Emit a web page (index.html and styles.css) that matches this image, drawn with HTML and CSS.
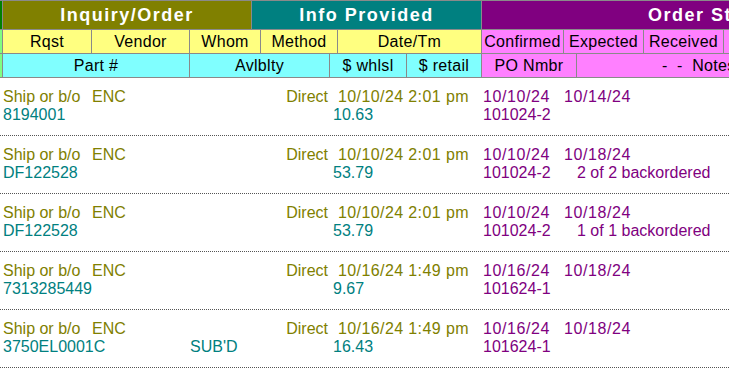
FILE: index.html
```html
<!DOCTYPE html>
<html>
<head>
<meta charset="utf-8">
<link rel="stylesheet" href="styles.css">
</head>
<body>
<div class="grid">
  <div class="hdr">
    <div class="hrow r1">
      <div class="strip s-dark"></div>
      <div class="cell g-olive w-inq">Inquiry/Order</div>
      <div class="cell g-teal w-info">Info Provided</div>
      <div class="cell g-purple w-order">Order Status</div>
    </div>
    <div class="hrow r2">
      <div class="strip s-light"></div>
      <div class="cell yel w-rqst">Rqst</div>
      <div class="cell yel w-vendor">Vendor</div>
      <div class="cell yel w-whom">Whom</div>
      <div class="cell yel w-method">Method</div>
      <div class="cell yel w-date">Date/Tm</div>
      <div class="cell pink w-conf">Confirmed</div>
      <div class="cell pink w-exp">Expected</div>
      <div class="cell pink w-rec">Received</div>
      <div class="cell pink w-more"></div>
    </div>
    <div class="hrow r3">
      <div class="strip s-light"></div>
      <div class="cell cyan w-part">Part #</div>
      <div class="cell cyan w-avl">Avlblty</div>
      <div class="cell cyan w-whlsl">$ whlsl</div>
      <div class="cell cyan w-retail">$ retail</div>
      <div class="cell pink w-po">PO Nmbr</div>
      <div class="cell pink w-notes">-  -  Notes  -  -</div>
    </div>
  </div>

  <div class="rec">
    <div class="line">
      <span class="d olive d-rqst">Ship or b/o</span><span class="d olive d-vendor">ENC</span><span class="d d-whom"></span><span class="d olive d-method">Direct</span><span class="d olive d-date">10/10/24 2:01 pm</span><span class="d purple d-conf">10/10/24</span><span class="d purple d-exp">10/14/24</span>
    </div>
    <div class="line">
      <span class="d teal d-part">8194001</span><span class="d teal d-avl"></span><span class="d teal d-whlsl">10.63</span><span class="d d-retail"></span><span class="d purple d-po">101024-2</span><span class="d purple d-notes"></span>
    </div>
  </div>

  <div class="rec">
    <div class="line">
      <span class="d olive d-rqst">Ship or b/o</span><span class="d olive d-vendor">ENC</span><span class="d d-whom"></span><span class="d olive d-method">Direct</span><span class="d olive d-date">10/10/24 2:01 pm</span><span class="d purple d-conf">10/10/24</span><span class="d purple d-exp">10/18/24</span>
    </div>
    <div class="line">
      <span class="d teal d-part">DF122528</span><span class="d teal d-avl"></span><span class="d teal d-whlsl">53.79</span><span class="d d-retail"></span><span class="d purple d-po">101024-2</span><span class="d purple d-notes">2 of 2 backordered</span>
    </div>
  </div>

  <div class="rec">
    <div class="line">
      <span class="d olive d-rqst">Ship or b/o</span><span class="d olive d-vendor">ENC</span><span class="d d-whom"></span><span class="d olive d-method">Direct</span><span class="d olive d-date">10/10/24 2:01 pm</span><span class="d purple d-conf">10/10/24</span><span class="d purple d-exp">10/18/24</span>
    </div>
    <div class="line">
      <span class="d teal d-part">DF122528</span><span class="d teal d-avl"></span><span class="d teal d-whlsl">53.79</span><span class="d d-retail"></span><span class="d purple d-po">101024-2</span><span class="d purple d-notes">1 of 1 backordered</span>
    </div>
  </div>

  <div class="rec">
    <div class="line">
      <span class="d olive d-rqst">Ship or b/o</span><span class="d olive d-vendor">ENC</span><span class="d d-whom"></span><span class="d olive d-method">Direct</span><span class="d olive d-date">10/16/24 1:49 pm</span><span class="d purple d-conf">10/16/24</span><span class="d purple d-exp">10/18/24</span>
    </div>
    <div class="line">
      <span class="d teal d-part">7313285449</span><span class="d teal d-avl"></span><span class="d teal d-whlsl">9.67</span><span class="d d-retail"></span><span class="d purple d-po">101624-1</span><span class="d purple d-notes"></span>
    </div>
  </div>

  <div class="rec">
    <div class="line">
      <span class="d olive d-rqst">Ship or b/o</span><span class="d olive d-vendor">ENC</span><span class="d d-whom"></span><span class="d olive d-method">Direct</span><span class="d olive d-date">10/16/24 1:49 pm</span><span class="d purple d-conf">10/16/24</span><span class="d purple d-exp">10/18/24</span>
    </div>
    <div class="line">
      <span class="d teal d-part">3750EL0001C</span><span class="d teal d-avl">SUB'D</span><span class="d teal d-whlsl">16.43</span><span class="d d-retail"></span><span class="d purple d-po">101624-1</span><span class="d purple d-notes"></span>
    </div>
  </div>
</div>
</body>
</html>
```

FILE: styles.css
```css
html, body {
  margin: 0;
  padding: 0;
  background: #ffffff;
}

.grid {
  width: 729px;
  height: 373px;
  overflow: hidden;
  font-family: "Liberation Sans", Arial, sans-serif;
}

.hdr {
  display: flex;
  flex-direction: column;
  gap: 1px;
  padding: 1px 0;
  background: #8a8a8a;
}

.hrow {
  display: flex;
  gap: 1px;
  flex-wrap: nowrap;
}

.r1 { height: 28px; }
.r2, .r3 { height: 23px; }

.strip { width: 2px; flex: none; }
.s-dark { background: #008000; }
.s-light { background: #80ff80; }

.cell {
  flex: none;
  display: flex;
  align-items: center;
  justify-content: center;
  white-space: pre;
  overflow: hidden;
  color: #000;
  font-size: 16px;
  letter-spacing: 0.3px;
}

.r1 .cell {
  color: #ffffff;
  font-weight: bold;
  font-size: 18px;
  letter-spacing: 1.5px;
}

.g-olive { background: #808000; }
.g-teal { background: #008080; }
.g-purple { background: #800080; justify-content: flex-start; padding-left: 166px; box-sizing: border-box; }
.yel { background: #ffff80; }
.cyan { background: #80ffff; }
.pink { background: #ff80ff; }

.w-inq { width: 248px; }
.w-info { width: 229px; }
.w-order { width: 458px; }

.w-rqst { width: 88px; }
.w-vendor { width: 97px; }
.w-whom { width: 70px; }
.w-method { width: 76px; }
.w-date { width: 143px; }
.w-conf { width: 81px; }
.w-exp { width: 79px; }
.w-rec { width: 79px; }
.w-more { width: 80px; }

.w-part { width: 186px; }
.w-avl { width: 139px; }
.w-whlsl { width: 76px; }
.w-retail { width: 74px; }
.w-po { width: 94px; }
.w-notes { width: 254px; justify-content: flex-start; padding-left: 85px; box-sizing: border-box; }

/* records */
.rec {
  padding: 10px 0 11px 0;
  border-bottom: 1px dotted #555555;
}

.line {
  display: flex;
  height: 18px;
  line-height: 18px;
  padding-left: 3px;
  font-size: 16px;
  white-space: nowrap;
}

.d {
  flex: none;
  box-sizing: border-box;
  overflow: visible;
}

.olive { color: #808000; }
.teal { color: #008080; }
.purple { color: #800080; }

.d-rqst { width: 89px; }
.d-vendor { width: 98px; }
.d-whom { width: 71px; }
.d-method { width: 77px; text-align: right; padding-right: 10px; }
.d-date { width: 144px; letter-spacing: 0.4px; }
.d-conf { width: 82px; padding-left: 1px; letter-spacing: 0.6px; }
.d-exp { width: 80px; letter-spacing: 0.6px; }

.d-part { width: 187px; }
.d-avl { width: 140px; }
.d-whlsl { width: 77px; padding-left: 3px; }
.d-retail { width: 75px; }
.d-po { width: 95px; padding-left: 1px; }
.d-notes { width: 150px; }
```
